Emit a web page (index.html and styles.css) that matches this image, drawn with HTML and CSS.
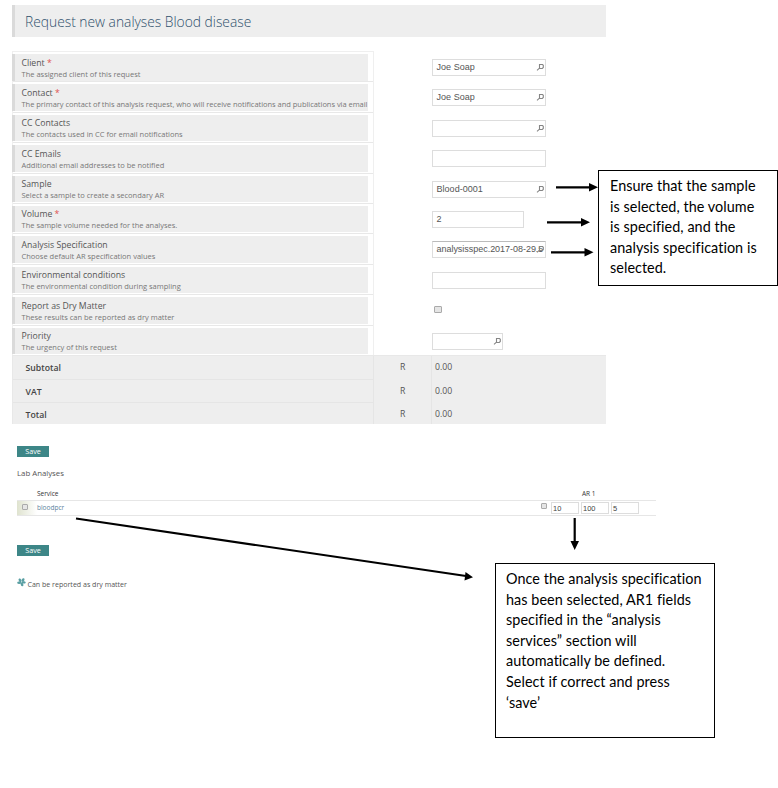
FILE: index.html
```html
<!DOCTYPE html>
<html lang="en">
<head>
<meta charset="utf-8">
<title>Request new analyses</title>
<link rel="stylesheet" href="styles.css">
</head>
<body>
<svg class="defs" width="0" height="0"><symbol id="lens" viewBox="0 0 9 9"><path d="M3.500 1.500h3l.8.8v2.200l-1 1H3.500zM3.500 5.200L1 7.300" fill="none" stroke="#858585" stroke-width="1.100"/></symbol></svg>
<main class="page">
  <h1 class="title">Request new analyses Blood disease</h1>
  <section class="form">
    <div class="row"><div class="head"><div class="label"><b>Client <i>*</i></b><span>The assigned client of this request</span></div></div><div class="field">Joe Soap<svg class="lens"><use href="#lens"/></svg></div></div>
    <div class="row"><div class="head"><div class="label"><b>Contact <i>*</i></b><span class="long">The primary contact of this analysis request, who will receive notifications and publications via email</span></div></div><div class="field">Joe Soap<svg class="lens"><use href="#lens"/></svg></div></div>
    <div class="row"><div class="head"><div class="label"><b>CC Contacts</b><span>The contacts used in CC for email notifications</span></div></div><div class="field"><svg class="lens"><use href="#lens"/></svg></div></div>
    <div class="row"><div class="head"><div class="label"><b>CC Emails</b><span>Additional email addresses to be notified</span></div></div><div class="field"></div></div>
    <div class="row"><div class="head"><div class="label"><b>Sample</b><span>Select a sample to create a secondary AR</span></div></div><div class="field">Blood-0001<svg class="lens"><use href="#lens"/></svg></div></div>
    <div class="row"><div class="head"><div class="label"><b>Volume <i>*</i></b><span>The sample volume needed for the analyses.</span></div></div><div class="field medium">2</div></div>
    <div class="row"><div class="head"><div class="label"><b>Analysis Specification</b><span>Choose default AR specification values</span></div></div><div class="field spec">analysisspec.2017-08-29.5<svg class="lens"><use href="#lens"/></svg></div></div>
    <div class="row"><div class="head"><div class="label"><b>Environmental conditions</b><span>The environmental condition during sampling</span></div></div><div class="field"></div></div>
    <div class="row"><div class="head"><div class="label"><b>Report as Dry Matter</b><span>These results can be reported as dry matter</span></div></div><div class="check"></div></div>
    <div class="row"><div class="head"><div class="label"><b>Priority</b><span>The urgency of this request</span></div></div><div class="field short"><svg class="lens"><use href="#lens"/></svg></div></div>
  </section>
  <section class="totals">
    <div class="total"><strong>Subtotal</strong><span class="cur">R</span><span class="amt">0.00</span></div>
    <div class="total"><strong>VAT</strong><span class="cur">R</span><span class="amt">0.00</span></div>
    <div class="total last"><strong>Total</strong><span class="cur">R</span><span class="amt">0.00</span></div>
  </section>
  <div class="save">Save</div>
  <h2 class="lab">Lab Analyses</h2>
  <section class="services">
    <div class="shead"><span>Service</span><span class="ar">AR 1</span></div>
    <div class="srow"><div class="pick"><div class="check small"></div></div><span class="name">bloodpcr</span><div class="check small"></div><div class="num">10</div><div class="num">100</div><div class="num">5</div></div>
  </section>
  <div class="save second">Save</div>
  <div class="legend"><svg width="9" height="9" viewBox="0 0 9 9"><g fill="#5a9fa3"><ellipse cx="3" cy="2.300" rx="1.300" ry="1.900" transform="rotate(-25 3 2.300)"/><ellipse cx="6" cy="2" rx="1.300" ry="1.900" transform="rotate(30 6 2)"/><ellipse cx="2.200" cy="4.800" rx="2" ry="1.200"/><ellipse cx="6.600" cy="4.400" rx="2" ry="1.200"/><ellipse cx="5" cy="6.400" rx="1.300" ry="2" transform="rotate(-20 5 6.400)"/></g></svg><span>Can be reported as dry matter</span></div>
</main>
<svg class="arrows" width="778" height="788" viewBox="0 0 778 788">
  <g stroke="#000" stroke-width="2.200" fill="none"><path d="M556 187.300H590M547 222.300H582M551 252.300H586M574.700 518V543M76 518.500L466 576"/></g>
  <path d="M589 183L598 187.300L589 191.600zM581 218L590 222.300L581 226.600zM584.500 248L593.500 252.300L584.500 256.600zM570.500 541H579L574.700 550zM465.500 572L473 577.300L464.500 580.500z"/>
</svg>
<aside class="note first"><span>Ensure that the sample</span><br><span>is selected, the volume</span><br><span>is specified, and the</span><br><span>analysis specification is</span><br><span>selected.</span></aside>
<aside class="note lower"><span>Once the analysis specification</span><br><span>has been selected, AR1 fields</span><br><span>specified in the “analysis</span><br><span>services” section will</span><br><span>automatically be defined.</span><br><span>Select if correct and press</span><br><span>‘save’</span></aside>
</body>
</html>
```
FILE: styles.css
```css
* { box-sizing: border-box; }
body { margin: 0; background: #fff; position: relative; width: 778px; height: 788px; overflow: hidden; font-family: "Open Sans", sans-serif; color: #555; }
.defs { position: absolute; }
.page { padding: 5px 0 0 12px; }
.title { margin: 0 0 14px; width: 594px; height: 32px; background: #eee; border-left: 3px solid #dadada; padding-left: 10px; font-size: 13.800px; line-height: 34px; font-weight: 300; color: #2f506c; }
.form { width: 362px; border: 1px solid #efefef; border-bottom: 0; height: 304px; display: grid; grid-template-rows: repeat(10, 30.400px); }
.row { display: flex; width: 594px; }
.head { width: 360px; flex: none; border-bottom: 1px solid #e8e8e8; padding-top: 2px; }
.label { width: 356px; height: 26.500px; margin-left: -1px; background: #eee; border-left: 3px solid #dadada; padding: 2.500px 0 0 6.500px; display: flex; flex-direction: column; white-space: nowrap; }
.label b { font-size: 8.700px; line-height: 12px; font-weight: 400; color: #555; }
.label i { color: #e05050; font-style: normal; }
.label span { font-size: 7.500px; line-height: 11px; color: #777; }
.label .long { letter-spacing: -.03px; }
.field { position: relative; margin: 7px 0 0 58.500px; width: 114px; height: 17px; flex: none; border: 1px solid #ddd; background: #fff; padding-left: 4px; font: 9px/15px "Liberation Sans", sans-serif; color: #555; white-space: nowrap; letter-spacing: .03px; }
.lens { position: absolute; right: 0; top: 3px; width: 9px; height: 9px; }
.medium { width: 92px; }
.short { width: 71px; }
.spec { border-top-color: #bbb; letter-spacing: -.03px; }
.check { width: 8px; height: 7px; margin: 11px 0 0 61px; border: 1px solid #aaa; border-radius: 1px; background: #e5e5e5; flex: none; }
.totals { width: 594px; height: 69px; background: #eee; border-top: 1px solid #e8e8e8; border-left: 1px solid #e8e8e8; font-size: 8.700px; }
.total { display: flex; height: 23.700px; line-height: 25.500px; }
.last { height: 20.600px; line-height: 24px; }
.total strong { width: 361px; padding-left: 12.500px; border-right: 1px solid #e5e5e5; border-bottom: 1px solid #e5e5e5; font-weight: 600; color: #444; }
.last strong { border-bottom: 0; }
.cur { width: 58px; padding-left: 26px; border-right: 1px solid #e5e5e5; line-height: 22px; }
.amt { padding-left: 3px; line-height: 22px; }
.save { margin: 22px 0 0 5px; width: 32px; height: 11px; background: #3d8687; color: #fff; text-align: center; font-size: 7.200px; line-height: 11px; }
.lab { margin: 9px 0 0 5px; font-size: 7.800px; line-height: 14px; font-weight: 400; }
.services { margin: 6.500px 0 0 5px; width: 639px; }
.shead { display: flex; height: 13px; padding-left: 20px; font-size: 6.500px; line-height: 13px; color: #333; }
.shead span { width: 545px; }
.shead .ar { width: auto; }
.srow { display: flex; height: 16px; border-top: 1px solid #e6e6e6; border-bottom: 1px solid #e6e6e6; font-size: 6.500px; line-height: 13px; }
.pick { width: 20px; background: linear-gradient(90deg, #dfe3cf, #fff); }
.pick .small { margin: 3px 0 0 5px; }
.small { width: 6px; height: 6px; margin: 2px 0 0 0; }
.name { width: 504px; color: #5b7f9d; }
.num { margin: 1px 0 0 2px; width: 28px; height: 12px; border: 1px solid #ddd; padding-left: 1px; font: 7.500px/11px "Liberation Sans", sans-serif; color: #444; }
.small + .num { margin-left: 4px; }
.second { margin-top: 29.500px; }
.legend { display: flex; margin: 21px 0 0 5px; font-size: 7.050px; line-height: 12px; }
.legend svg { margin-top: 1px; }
.legend span { margin: 1px 0 0 1.500px; }
.arrows { position: absolute; left: 0; top: 0; }
.note { position: absolute; background: #fff; border: 1px solid #000; font: 14.400px/20.600px Lato, sans-serif; letter-spacing: .05px; font-variant-ligatures: none; color: #000; white-space: nowrap; }
.first { left: 598px; top: 170px; width: 180px; height: 116px; padding: 5px 0 0 11px; }
.lower { left: 495px; top: 563px; width: 220px; height: 175px; padding: 5px 0 0 10px; }
```
